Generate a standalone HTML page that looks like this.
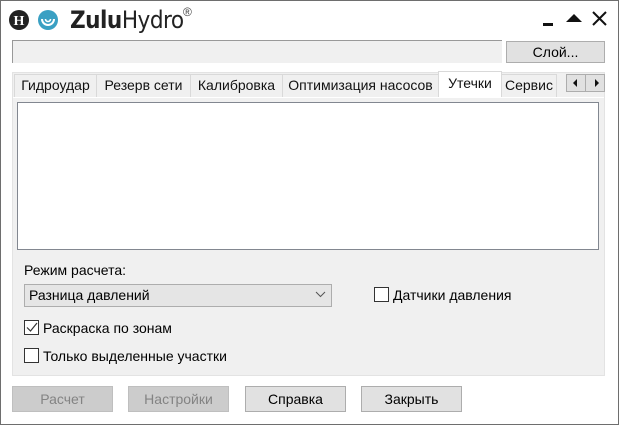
<!DOCTYPE html>
<html><head><meta charset="utf-8"><style>
*{box-sizing:border-box;margin:0;padding:0}
body{width:619px;height:425px;background:#fff;font-family:"Liberation Sans",sans-serif;font-size:14px;color:#000;position:relative;overflow:hidden}
.a{position:absolute}
.win{left:0;top:0;width:619px;height:425px;border:1px solid #6e6e6e}
.tab{position:absolute;top:74px;height:23px;border:1px solid #d9d9d9;border-bottom:none;background:#f0f0f0;line-height:21px;text-align:center;font-size:14px;color:#111;white-space:nowrap;overflow:hidden}
.btn{position:absolute;top:386px;height:26px;width:101px;background:#e1e1e1;border:1px solid #adadad;text-align:center;line-height:24px}
.dis{background:#cccccc;border-color:#bfbfbf;color:#838383}
.cb{position:absolute;width:15px;height:15px;border:1px solid #333;background:#fff}
</style></head><body>
<div class="a win"></div>
<svg class="a" style="left:9px;top:9px" width="56" height="22">
<circle cx="10" cy="11" r="10" fill="#222"/>
<text x="10" y="16" font-family="Liberation Serif" font-weight="bold" font-size="14" fill="#fff" text-anchor="middle">H</text>
<circle cx="39" cy="11" r="10" fill="#3aa0c3"/>
<path d="M33 10 a6 6 0 0 0 12 0" fill="none" stroke="#fff" stroke-width="2"/>
<path d="M36.5 10 a2.5 2.5 0 0 0 5 0" fill="none" stroke="#fff" stroke-width="1.6"/>
</svg>
<div class="a" style="left:70px;top:6px;font-size:24px;color:#222;font-family:'DejaVu Sans Condensed','DejaVu Sans',sans-serif;letter-spacing:-0.5px"><span style="font-weight:bold">Zulu</span><span style="font-weight:normal">Hydro</span></div>
<div class="a" style="left:183px;top:5px;font-size:12px;color:#444">®</div>
<div class="a" style="left:543px;top:23px;width:10px;height:3px;background:#111"></div>
<svg class="a" style="left:565px;top:12px" width="18" height="12"><path d="M1 10 L9 2 L17 10 Z" fill="#111"/></svg>
<svg class="a" style="left:592px;top:11px" width="15" height="15"><path d="M1 1 L14 14 M14 1 L1 14" stroke="#111" stroke-width="2"/></svg>
<div class="a" style="left:12px;top:40px;width:490px;height:23px;background:#f0f0f0;border-left:1px solid #999;border-top:1px solid #999"></div>
<div class="a" style="left:506px;top:41px;width:99px;height:22px;background:#e1e1e1;border:1px solid #adadad;text-align:center;line-height:20px">Слой...</div>
<div class="a" style="left:12px;top:72px;width:593px;height:304px;background:#f0f0f0;border:1px solid #e3e3e3"></div>
<div class="tab" style="left:14px;width:83px">Гидроудар</div>
<div class="tab" style="left:96px;width:95px">Резерв сети</div>
<div class="tab" style="left:190px;width:93px">Калибровка</div>
<div class="tab" style="left:282px;width:157px">Оптимизация насосов</div>
<div class="tab" style="left:438px;top:71px;height:27px;width:64px;background:#fff;line-height:22px">Утечки</div>
<div class="tab" style="left:501px;width:56px;text-align:left;padding-left:3px">Сервис</div>
<div class="a" style="left:566px;top:74px;width:39px;height:18px;background:#e1e1e1;border:1px solid #adadad"></div>
<div class="a" style="left:585px;top:74px;width:1px;height:18px;background:#adadad"></div>
<svg class="a" style="left:572px;top:78px" width="30" height="10"><path d="M5 1 L1 5 L5 9Z M23 1 L27 5 L23 9Z" fill="#111"/></svg>
<div class="a" style="left:13px;top:97px;width:591px;height:1px;background:#fff"></div>
<div class="a" style="left:17px;top:102px;width:582px;height:148px;background:#fff;border:1px solid #828790"></div>
<div class="a" style="left:24px;top:262px">Режим расчета:</div>
<div class="a" style="left:24px;top:284px;width:308px;height:23px;background:#e5e5e5;border:1px solid #adadad;padding-left:4px;line-height:21px">Разница давлений</div>
<svg class="a" style="left:315px;top:291px" width="11" height="7"><path d="M1 1 L5.5 5.5 L10 1" stroke="#555" fill="none"/></svg>
<div class="cb" style="left:374px;top:287px"></div>
<div class="a" style="left:393px;top:287px">Датчики давления</div>
<div class="cb" style="left:24px;top:320px"></div>
<svg class="a" style="left:26px;top:322px" width="12" height="11"><path d="M1 5.5 L4.5 9 L11 1" stroke="#333" stroke-width="1.2" fill="none"/></svg>
<div class="a" style="left:43px;top:320px">Раскраска по зонам</div>
<div class="cb" style="left:24px;top:348px"></div>
<div class="a" style="left:43px;top:348px">Только выделенные участки</div>
<div class="btn dis" style="left:12px">Расчет</div>
<div class="btn dis" style="left:128px">Настройки</div>
<div class="btn" style="left:245px">Справка</div>
<div class="btn" style="left:361px">Закрыть</div>
</body></html>
